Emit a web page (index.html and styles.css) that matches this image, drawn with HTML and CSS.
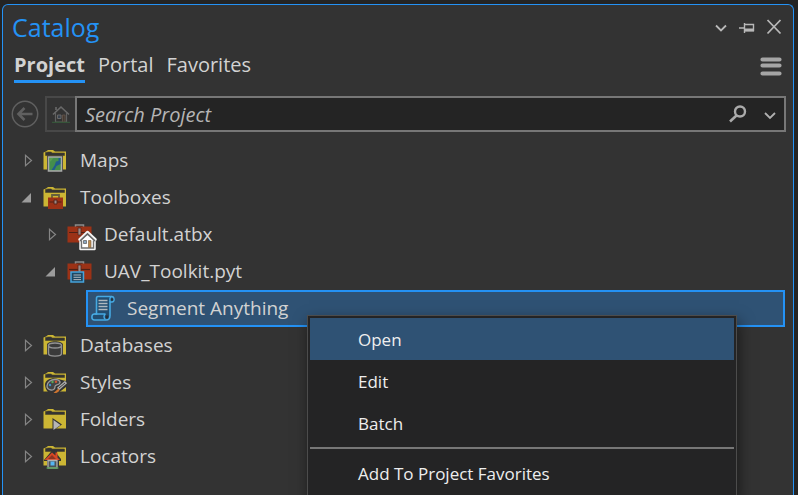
FILE: index.html
```html
<!DOCTYPE html>
<html lang="en">
<head>
<meta charset="utf-8">
<title>Catalog</title>
<link rel="stylesheet" href="styles.css">
</head>
<body>
<svg class="defs" aria-hidden="true">
  <symbol id="folder" viewBox="0 0 26 25">
    <path d="M.5 21.500V4.500L3 3.500 5 2h5l2 1.500h11v18z" fill="#ccb634"/>
    <path d="M2.500 4.500L5 4h3l1.500 1H21.500v2.500h-19z" fill="#333" stroke="#4a4528" stroke-width=".6"/>
  </symbol>
  <symbol id="case" viewBox="0 0 26 25">
    <path d="M8.500 5V3h8v2" fill="none" stroke="#8c8c8c" stroke-width="1.500"/>
    <path d="M.5 4.500h24v16H.5z" fill="#9c3216"/>
    <path d="M2 10.500h21" stroke="#4e2116" stroke-width="1.200"/>
    <path d="M11 6h3v7h-3z" fill="#9b8b87" stroke="#5a2419" stroke-width=".8"/>
  </symbol>
  <symbol id="closed" viewBox="0 0 12 13">
    <path d="M4.500 1.300v10.400L10.500 6.500z" fill="none" stroke="#858585" stroke-width="1.200"/>
  </symbol>
  <symbol id="opened" viewBox="0 0 12 13">
    <path d="M10 2v9.500H.5z" fill="#9c9c9c"/>
  </symbol>
</svg>
<main class="panel">
  <header class="title-bar">
    <h1 class="title">Catalog</h1>
    <div class="window-tools">
      <button class="tool" aria-label="Window position"><svg width="14" height="16" viewBox="0 0 14 16"><path d="M2 6.500l5 5 5-5" fill="none" stroke="#b8b8b8" stroke-width="1.800"/></svg></button>
      <button class="tool" aria-label="Auto hide"><svg width="16" height="16" viewBox="0 0 16 16"><path d="M0 9h5M5.500 4v10M6 5.500h8.500v6H6" fill="none" stroke="#b8b8b8" stroke-width="1.400"/><path d="M6 9.500h9v3H6z" fill="#b8b8b8"/></svg></button>
      <button class="tool" aria-label="Close"><svg width="16" height="16" viewBox="0 0 16 16"><path d="M1.500 1l13 13.500M14.500 1l-13 13.500" fill="none" stroke="#b8b8b8" stroke-width="1.800"/></svg></button>
    </div>
  </header>
  <nav class="tabs">
    <button class="tab tab-active">Project</button>
    <button class="tab">Portal</button>
    <button class="tab">Favorites</button>
    <button class="tool menu-button" aria-label="Menu"><svg width="22" height="20" viewBox="0 0 22 20"><path d="M2.500 3.500h17M2.500 9.500h17M2.500 17.500h17" stroke="#a5a5a5" stroke-width="4.200" stroke-linecap="round"/></svg></button>
  </nav>
  <div class="search-bar">
    <button class="tool back" aria-label="Back"><svg width="28" height="28" viewBox="0 0 28 28"><circle cx="14" cy="14" r="12.700" fill="none" stroke="#606060" stroke-width="1.500"/><path d="M21.500 14H7.500M13.500 8l-6 6 6 6" fill="none" stroke="#606060" stroke-width="2.600"/></svg></button>
    <button class="tool home" aria-label="Home"><svg width="18" height="18" viewBox="0 0 18 18"><path d="M3.500 8v9h11V8" fill="none" stroke="#606060" stroke-width="1.200"/><path d="M1 9.500L9 2l8 7.500M4 5V2" fill="none" stroke="#696969" stroke-width="1.600"/><path d="M5.500 10h3.500v3.500H5.500z" fill="#394350" stroke="#686868"/><path d="M10.500 10H13v7h-2.500z" fill="#453a32" stroke="#66574c" stroke-width=".8"/><path d="M0 17.300h18" stroke="#36553a" stroke-width="1.200"/></svg></button>
    <form class="search-box">
      <input class="search-input" type="text" placeholder="Search Project" aria-label="Search Project">
      <button class="tool" type="button" aria-label="Search"><svg width="18" height="18" viewBox="0 0 18 18"><circle cx="11" cy="6.500" r="5" fill="none" stroke="#aaa" stroke-width="2.400"/><path d="M7.500 10.500l-6.500 6" stroke="#aaa" stroke-width="2.600"/></svg></button>
      <button class="tool" type="button" aria-label="Search options"><svg width="12" height="14" viewBox="0 0 12 14"><path d="M1 6l5 5 5-5" fill="none" stroke="#b0b0b0" stroke-width="1.800"/></svg></button>
    </form>
  </div>
  <ul class="tree" role="tree">
    <li class="row" role="treeitem" aria-expanded="false">
      <svg class="arrow"><use href="#closed"/></svg>
      <svg class="icon" viewBox="0 0 26 25"><use href="#folder"/><path d="M4 7.500h16V22H4z" fill="#333"/><path d="M5.500 9h13v14h-13z" fill="#448e4c" stroke="#aaa" stroke-width="1.600"/><path d="M17.500 10v6l-4 2-2 4H8.500l3-4.500 1.500-4 2.500-.5v-3z" fill="#205b8d"/><path d="M6.500 10h4l-3 3.500h-1z" fill="#5a9d51"/></svg>
      <span>Maps</span>
    </li>
    <li class="row" role="treeitem" aria-expanded="true">
      <svg class="arrow"><use href="#opened"/></svg>
      <svg class="icon" viewBox="0 0 26 25"><use href="#folder"/><path d="M9 13v-3h7v3" fill="none" stroke="#65603d" stroke-width="1.800"/><path d="M5 12.500h15V24H5z" fill="#9c3216"/><path d="M6.500 17h12" stroke="#512217" stroke-width="1.200"/><path d="M11 15h3v4h-3z" fill="#9b8b87" stroke="#5a2419"/></svg>
      <span>Toolboxes</span>
    </li>
    <li class="row level-2" role="treeitem" aria-expanded="false">
      <svg class="arrow"><use href="#closed"/></svg>
      <svg class="icon" viewBox="0 0 26 25"><use href="#case"/><path d="M13.500 18.500V27h14v-8.500l1-1-8-7.500-8 7.500z" fill="#fff" stroke="#f4f4f4" stroke-width="2.500" stroke-linejoin="round"/><path d="M14.500 18.500v7.500h12v-7.500" fill="#fff" stroke="#707070" stroke-width="1.400"/><path d="M13 19l7.500-7 7.500 7" fill="none" stroke="#656565" stroke-width="1.700"/><path d="M16.500 18.500h3v3h-3z" fill="#8aa7c1" stroke="#666" stroke-width=".8"/><path d="M21.500 18.500H24v7h-2.500z" fill="#c08b4a" stroke="#826548" stroke-width=".7"/></svg>
      <span>Default.atbx</span>
    </li>
    <li class="row level-2" role="treeitem" aria-expanded="true">
      <svg class="arrow"><use href="#opened"/></svg>
      <svg class="icon" viewBox="0 0 26 25"><use href="#case"/><path d="M4 13h12.500v10H4z" fill="#1d4763" stroke="#46a4dc" stroke-width="1.500"/><path d="M6.500 16h7.500M6.500 18.300h7.500M6.500 20.600h7.500" stroke="#b0b8be"/></svg>
      <span>UAV_Toolkit.pyt</span>
    </li>
    <li class="row selected" role="treeitem" aria-selected="true">
      <svg class="icon" viewBox="0 0 26 25"><path d="M8 .5h13.500c3 0 3.500 5.500.5 5.500h-2v13.500c0 3-1.500 4.500-4 4.500H4.500C1 24 1 18 4.500 18h2V2.500c0-1 .5-2 1.500-2z" fill="#214d70" stroke="#46a9e2" stroke-width="1.600"/><path d="M4.500 18h11M20 6V2.500c0-1 .5-1.500 1.500-2M15.500 23.500c-2-1.500-2-4 0-5.500" fill="none" stroke="#46a9e2" stroke-width="1.500"/><path d="M22 2.500v2M17 19.500v3" stroke="#252f39" stroke-width="2.500"/><path d="M8.500 4.500h9M8.500 7.500h9M8.500 10.500h9M8.500 13.500h9" stroke="#aeb8bf" stroke-width="1.400"/></svg>
      <span>Segment Anything</span>
    </li>
    <li class="row" role="treeitem" aria-expanded="false">
      <svg class="arrow"><use href="#closed"/></svg>
      <svg class="icon" viewBox="0 0 26 25"><use href="#folder"/><path d="M4 12c0-5 16-5 16 0v9c0 4-16 4-16 0z" fill="#333"/><path d="M5.500 12.500v8c0 3.500 13 3.500 13 0v-8" fill="#3a3a3a" stroke="#929292" stroke-width="1.400"/><ellipse cx="12" cy="12.500" rx="6.500" ry="2.500" fill="#3a3a3a" stroke="#929292" stroke-width="1.400"/></svg>
      <span>Databases</span>
    </li>
    <li class="row" role="treeitem" aria-expanded="false">
      <svg class="arrow"><use href="#closed"/></svg>
      <svg class="icon" viewBox="0 0 26 25"><use href="#folder"/><path d="M2 14c1-5 8-7 13-5l8 2v6l-9 7-9-2c-2-2-3-5-3-8z" fill="#333"/><path d="M4 16c0-4 4-6.500 8-6.500 5 0 6 3 4 4.500-2 1.200-4 .5-4 2.500s-1 4-4 3.500-4-1.500-4-4z" fill="#444" stroke="#9c9c9c" stroke-width="1.300"/><circle cx="7" cy="15" r="1.200" fill="#3c92ce"/><circle cx="9.500" cy="12" r="1.200" fill="#5aa857"/><circle cx="13" cy="11.800" r="1.200" fill="#d15533"/><path d="M23 12l-8 7" stroke="#aaa" stroke-width="3"/><path d="M22 13l-6 5" stroke="#454545"/><path d="M15.500 18.500l-5 4.500c3 .3 5-.5 6-3z" fill="#cd7430"/></svg>
      <span>Styles</span>
    </li>
    <li class="row" role="treeitem" aria-expanded="false">
      <svg class="arrow"><use href="#closed"/></svg>
      <svg class="icon" viewBox="0 0 26 25"><use href="#folder"/><path d="M9.500 11v13l9.500-6.500z" fill="#333"/><path d="M10.500 13v10l7-5z" fill="#b6b6b6"/></svg>
      <span>Folders</span>
    </li>
    <li class="row" role="treeitem" aria-expanded="false">
      <svg class="arrow"><use href="#closed"/></svg>
      <svg class="icon" viewBox="0 0 26 25"><use href="#folder"/><path d="M9.500 6L1 16v1h3v8h12v-8h2v-2L14 10V7z" fill="#333"/><path d="M9 8.500L1.500 16h15.500L14.500 13.500V8.500h-2v3z" fill="#d84824"/><path d="M9 11L5 15h8z" fill="#8b3422"/><path d="M5 16.500h9V24H5z" fill="#4b5257" stroke="#b0b0b0" stroke-width="1.300"/><path d="M7.500 17.500h4v4h-4z" fill="#55b5f2"/><path d="M3.500 24h12" stroke="#4f9b50" stroke-width="1.300"/></svg>
      <span>Locators</span>
    </li>
  </ul>
  <div class="context-menu" role="menu">
    <button class="menu-item menu-item-active" role="menuitem">Open</button>
    <button class="menu-item" role="menuitem">Edit</button>
    <button class="menu-item" role="menuitem">Batch</button>
    <hr class="separator">
    <button class="menu-item" role="menuitem">Add To Project Favorites</button>
  </div>
</main>
</body>
</html>
```
FILE: styles.css
```css
* {
  box-sizing: border-box;
}

body {
  margin: 0;
  padding: 4px 4px 0 2px;
  height: 100vh;
  overflow: hidden;
  background: #242424;
  color: #d2d2d2;
  font-family: "Segoe UI", "Open Sans", "Noto Sans", sans-serif;
  font-size: 19px;
}

button,
input {
  margin: 0;
  padding: 0;
  border: 0;
  background: none;
  color: inherit;
  font: inherit;
}

svg {
  display: block;
  flex: none;
}

.defs {
  position: absolute;
  width: 0;
  height: 0;
}

.panel {
  position: relative;
  height: 100%;
  overflow: hidden;
  border: 1px solid #2492f5;
  border-bottom: 0;
  border-radius: 6px 6px 0 0;
  background: #333;
}

.title-bar {
  display: flex;
  align-items: center;
  justify-content: space-between;
  height: 44px;
  padding: 0 11px 0 9px;
}

.title {
  margin: 0;
  color: #2492f5;
  font-size: 25px;
  font-weight: 400;
  line-height: 44px;
}

.window-tools {
  display: flex;
  align-items: center;
  gap: 11px;
}

.tabs {
  display: flex;
  align-items: center;
  gap: 13px;
  height: 34px;
  padding: 0 11px;
}

.tab {
  height: 34px;
  line-height: 28px;
  border-bottom: 3px solid transparent;
  font-size: 20px;
}

.tab-active {
  border-color: #2492f5;
  font-weight: 700;
}

.menu-button {
  margin-left: auto;
}

.search-bar {
  display: flex;
  align-items: center;
  height: 36px;
  margin: 13px 7px 10px 8px;
}

.home {
  display: grid;
  place-items: center;
  width: 30px;
  height: 36px;
  margin-left: 6px;
  border: 2px solid #484848;
  border-right: 0;
}

.search-box {
  display: flex;
  flex: 1;
  align-items: center;
  gap: 17px;
  height: 36px;
  padding: 0 8px;
  border: 2px solid #777;
  background: #242424;
}

.search-input {
  flex: 1;
  min-width: 0;
  font-size: 20px;
  font-style: italic;
}

.search-input::placeholder {
  color: #b5b5b5;
  opacity: 1;
}

.tree {
  margin: 0;
  padding: 0 8px 0 18px;
  list-style: none;
}

.row {
  display: flex;
  align-items: center;
  height: 37px;
  line-height: 37px;
  white-space: nowrap;
}

.level-2 {
  padding-left: 24px;
}

.arrow {
  width: 12px;
  height: 13px;
  margin-right: 10px;
}

.icon {
  width: 26px;
  height: 25px;
  margin-right: 11px;
  overflow: visible;
}

.selected {
  margin-left: 65px;
  padding-left: 2px;
  border: 2px solid #2492f5;
  background: #2f5274;
}

.context-menu {
  position: absolute;
  top: 310px;
  left: 304px;
  right: 56px;
  padding: 2px;
  border: 1px solid #4c4c4c;
  background: #242425;
  box-shadow: 2px 6px 14px rgb(0 0 0 / 50%);
  color: #eee;
  font-size: 17px;
}

.menu-item {
  display: block;
  width: 100%;
  height: 42px;
  padding: 2px 0 0 48px;
  line-height: 40px;
  text-align: left;
}

.menu-item-active {
  background: #2f5274;
}

.separator {
  height: 2px;
  margin: 3px 0;
  border: 0;
  background: #777;
}
```
